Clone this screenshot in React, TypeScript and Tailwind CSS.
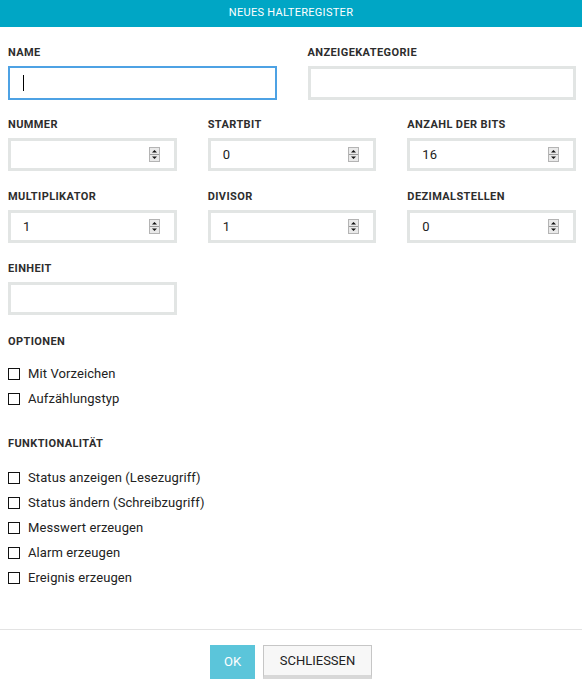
import React from 'react';

const font = { fontFamily: 'Roboto, "Liberation Sans", sans-serif' };

const Spinner: React.FC = () => (
  <svg width="11" height="15" viewBox="0 0 11 15" className="shrink-0">
    <rect x="0.5" y="0.5" width="10" height="14" fill="#e9e9e9" stroke="#b4b4b4" />
    <line x1="1" y1="7.5" x2="10" y2="7.5" stroke="#9a9a9a" />
    <path d="M3 5.5 L5.5 3 L8 5.5 Z" fill="#111" />
    <path d="M3 9.5 L5.5 12 L8 9.5 Z" fill="#111" />
  </svg>
);

const labelCls = 'text-[11px] leading-[14px] font-bold text-[#2d2d2d] tracking-[0.4px]';

const Label: React.FC<{ children: React.ReactNode }> = ({ children }) => (
  <div className={`${labelCls} mb-[6px]`}>{children}</div>
);

const NumberField: React.FC<{ label: string; value?: string }> = ({ label, value }) => (
  <div className="flex flex-col">
    <Label>{label}</Label>
    <div className="h-[33px] border-[3px] border-[#e2e5e4] bg-white flex items-center pl-[12px] pr-[14px]">
      <span className="flex-1 text-[13px] text-[#222]">{value}</span>
      <Spinner />
    </div>
  </div>
);

const Check: React.FC<{ label: string }> = ({ label }) => (
  <div className="h-[25px] flex items-center gap-[8px]">
    <div className="w-[12px] h-[12px] border-[1.5px] border-[#111] bg-white shrink-0" />
    <span className="text-[13px] tracking-[0.1px] text-[#222]">{label}</span>
  </div>
);

export default function App() {
  return (
    <div className="w-[582px] h-[692px] bg-white flex flex-col" style={font}>
      <div className="h-[27px] bg-[#00a6c5] flex items-center justify-center shrink-0">
        <span className="text-[11px] text-white tracking-[0.3px]">NEUES HALTEREGISTER</span>
      </div>

      <div className="flex-1 pl-[8px] pr-[6px] pt-[19px]">
        <div className="grid grid-cols-2 gap-x-[31px]">
          <div className="flex flex-col">
            <Label>NAME</Label>
            <div className="h-[34px] border-2 border-[#4da2e4] bg-white flex items-center pl-[13px]">
              <div className="w-[1px] h-[16px] bg-black" />
            </div>
          </div>
          <div className="flex flex-col">
            <Label>ANZEIGEKATEGORIE</Label>
            <div className="h-[34px] border-[3px] border-[#e2e5e4] bg-white" />
          </div>
        </div>

        <div className="grid grid-cols-3 gap-x-[31px] gap-y-[19px] mt-[18px]">
          <NumberField label="NUMMER" />
          <NumberField label="STARTBIT" value="0" />
          <NumberField label="ANZAHL DER BITS" value="16" />
          <NumberField label="MULTIPLIKATOR" value="1" />
          <NumberField label="DIVISOR" value="1" />
          <NumberField label="DEZIMALSTELLEN" value="0" />
          <div className="flex flex-col">
            <Label>EINHEIT</Label>
            <div className="h-[33px] border-[3px] border-[#e2e5e4] bg-white" />
          </div>
        </div>

        <div className="mt-[20px]">
          <div className={labelCls}>OPTIONEN</div>
          <div className="mt-[12px] flex flex-col">
            <Check label="Mit Vorzeichen" />
            <Check label="Aufzählungstyp" />
          </div>
        </div>

        <div className="mt-[26px]">
          <div className={labelCls}>FUNKTIONALITÄT</div>
          <div className="mt-[14px] flex flex-col">
            <Check label="Status anzeigen (Lesezugriff)" />
            <Check label="Status ändern (Schreibzugriff)" />
            <Check label="Messwert erzeugen" />
            <Check label="Alarm erzeugen" />
            <Check label="Ereignis erzeugen" />
          </div>
        </div>
      </div>

      <div className="h-[63px] border-t border-[#e3e3e3] flex justify-center items-start pt-[15px] gap-[8px] shrink-0">
        <button className="w-[45px] h-[34px] bg-[#5bc5da] text-white text-[13px]">OK</button>
        <button className="w-[109px] h-[34px] bg-[#f7f7f7] border border-[#c6c6c6] border-b-[4px] border-b-[#d8d8d8] text-[13px] text-[#222]">SCHLIESSEN</button>
      </div>
    </div>
  );
}
